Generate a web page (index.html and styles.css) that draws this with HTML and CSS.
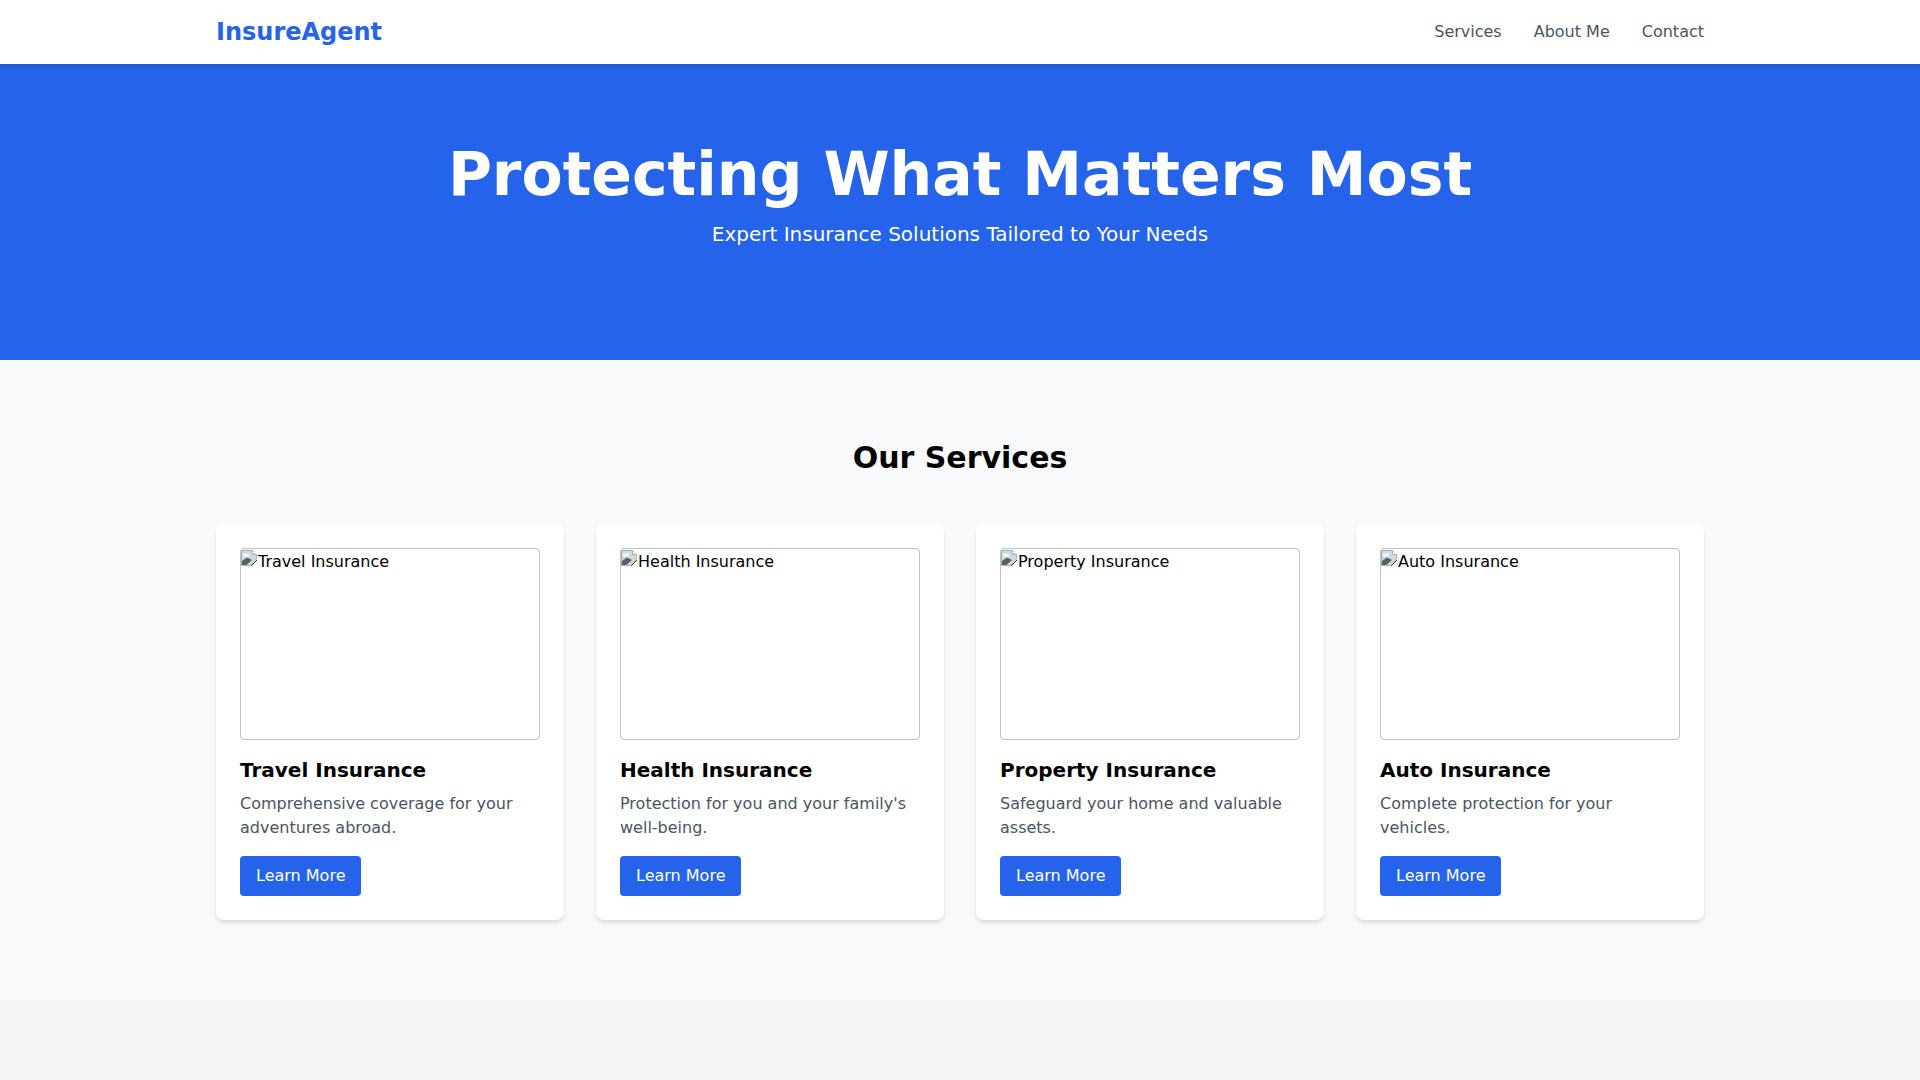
FILE: index.html
```html
<!DOCTYPE html>
<html lang="en">

<head>
    <meta charset="UTF-8">
    <meta name="viewport" content="width=device-width, initial-scale=1.0">
    <title>InsureAgent</title>
    <link rel="stylesheet" href="styles.css">
</head>

<body>
    <header class="header">
        <div class="container header-inner">
            <a class="logo" href="#">InsureAgent</a>
            <nav class="nav">
                <a href="#services">Services</a>
                <a href="#about">About Me</a>
                <a href="#contact">Contact</a>
            </nav>
        </div>
    </header>

    <section class="hero">
        <div class="container">
            <h1 class="hero-title">Protecting What Matters Most</h1>
            <p class="hero-sub">Expert Insurance Solutions Tailored to Your Needs</p>
        </div>
    </section>

    <section class="services" id="services">
        <div class="container">
            <h2 class="section-title">Our Services</h2>
            <div class="cards">
                <div class="card">
                    <div class="card-img">
                        <svg class="broken" width="16" height="16" viewBox="0 0 16 16">
                            <path d="M0.5 0.5h11l4 4V9L9 15.5H0.5z" fill="#cfd9e3" stroke="#a7aeb5" />
                            <path d="M11.5 0.5v4h4" fill="#fff" stroke="#a7aeb5" />
                            <path d="M2 3.5h6v3H2z" fill="#f4f7fa" />
                            <path d="M1 15V11l5-3.5 5 2.5-5.5 5z" fill="#56625d" />
                            <path d="M9.5 16l6.5-6.5V16z" fill="#fff" />
                            <path d="M10 16l6-6" stroke="#333" stroke-width="1" />
                        </svg>Travel Insurance
                    </div>
                    <h3 class="card-title">Travel Insurance</h3>
                    <p class="card-text">Comprehensive coverage for your adventures abroad.</p>
                    <a class="btn" href="#">Learn More</a>
                </div>
                <div class="card">
                    <div class="card-img">
                        <svg class="broken" width="16" height="16" viewBox="0 0 16 16">
                            <path d="M0.5 0.5h11l4 4V9L9 15.5H0.5z" fill="#cfd9e3" stroke="#a7aeb5" />
                            <path d="M11.5 0.5v4h4" fill="#fff" stroke="#a7aeb5" />
                            <path d="M2 3.5h6v3H2z" fill="#f4f7fa" />
                            <path d="M1 15V11l5-3.5 5 2.5-5.5 5z" fill="#56625d" />
                            <path d="M9.5 16l6.5-6.5V16z" fill="#fff" />
                            <path d="M10 16l6-6" stroke="#333" stroke-width="1" />
                        </svg>Health Insurance
                    </div>
                    <h3 class="card-title">Health Insurance</h3>
                    <p class="card-text">Protection for you and your family's well-being.</p>
                    <a class="btn" href="#">Learn More</a>
                </div>
                <div class="card">
                    <div class="card-img">
                        <svg class="broken" width="16" height="16" viewBox="0 0 16 16">
                            <path d="M0.5 0.5h11l4 4V9L9 15.5H0.5z" fill="#cfd9e3" stroke="#a7aeb5" />
                            <path d="M11.5 0.5v4h4" fill="#fff" stroke="#a7aeb5" />
                            <path d="M2 3.5h6v3H2z" fill="#f4f7fa" />
                            <path d="M1 15V11l5-3.5 5 2.5-5.5 5z" fill="#56625d" />
                            <path d="M9.5 16l6.5-6.5V16z" fill="#fff" />
                            <path d="M10 16l6-6" stroke="#333" stroke-width="1" />
                        </svg>Property Insurance
                    </div>
                    <h3 class="card-title">Property Insurance</h3>
                    <p class="card-text">Safeguard your home and valuable assets.</p>
                    <a class="btn" href="#">Learn More</a>
                </div>
                <div class="card">
                    <div class="card-img">
                        <svg class="broken" width="16" height="16" viewBox="0 0 16 16">
                            <path d="M0.5 0.5h11l4 4V9L9 15.5H0.5z" fill="#cfd9e3" stroke="#a7aeb5" />
                            <path d="M11.5 0.5v4h4" fill="#fff" stroke="#a7aeb5" />
                            <path d="M2 3.5h6v3H2z" fill="#f4f7fa" />
                            <path d="M1 15V11l5-3.5 5 2.5-5.5 5z" fill="#56625d" />
                            <path d="M9.5 16l6.5-6.5V16z" fill="#fff" />
                            <path d="M10 16l6-6" stroke="#333" stroke-width="1" />
                        </svg>Auto Insurance
                    </div>
                    <h3 class="card-title">Auto Insurance</h3>
                    <p class="card-text">Complete protection for your vehicles.</p>
                    <a class="btn" href="#">Learn More</a>
                </div>
            </div>
        </div>
    </section>
</body>

</html>
```

FILE: styles.css
```css
body {
    margin: 0;
    font-family: "DejaVu Sans", sans-serif;
    background-color: #f3f4f6; /* gray-100 */
    color: #000;
}

a {
    text-decoration: none;
}

.container {
    max-width: 1536px;
    margin: 0 auto;
    padding: 0 24px;
    box-sizing: border-box;
}

/* header */
.header {
    background-color: #fff;
    box-shadow: 0 4px 6px -1px rgba(0, 0, 0, 0.1);
    position: relative;
    z-index: 1;
}

.header-inner {
    height: 64px;
    display: flex;
    align-items: center;
    justify-content: space-between;
}

.logo {
    font-size: 24px;
    line-height: 32px;
    font-weight: bold;
    color: #2563eb;
}

.nav {
    display: flex;
    gap: 32px;
}

.nav a {
    color: #4b5563;
    font-size: 16px;
    line-height: 24px;
}

/* hero */
.hero {
    background-color: #2563eb;
    color: #fff;
    text-align: center;
    padding: 80px 0 112px;
}

.hero-title {
    margin: 0 0 16px;
    font-size: 60px;
    line-height: 1;
    font-weight: bold;
}

.hero-sub {
    margin: 0;
    font-size: 20px;
    line-height: 28px;
}

/* services */
.services {
    background-color: #f9fafb;
    padding: 80px 0;
}

.section-title {
    margin: 0 0 48px;
    text-align: center;
    font-size: 30px;
    line-height: 36px;
    font-weight: bold;
}

.cards {
    display: grid;
    grid-template-columns: repeat(4, 1fr);
    gap: 32px;
}

.card {
    background-color: #fff;
    border-radius: 8px;
    box-shadow: 0 4px 6px -1px rgba(0, 0, 0, 0.1), 0 2px 4px -2px rgba(0, 0, 0, 0.1);
    padding: 24px;
}

/* stands in for the broken product image */
.card-img {
    height: 192px;
    box-sizing: border-box;
    border: 1px solid #c0c0c0;
    border-radius: 4px;
    margin-bottom: 16px;
    font-size: 16px;
    line-height: 20px;
    color: #000;
    padding: 3px 0 0;
}

.broken {
    vertical-align: top;
    margin: -2px 1px 0 0;
}

.card-title {
    margin: 0 0 8px;
    font-size: 20px;
    line-height: 28px;
    font-weight: bold;
}

.card-text {
    margin: 0 0 16px;
    color: #4b5563;
    font-size: 16px;
    line-height: 24px;
}

.btn {
    display: inline-block;
    background-color: #2563eb;
    color: #fff;
    font-size: 16px;
    line-height: 24px;
    padding: 8px 16px;
    border-radius: 4px;
}

.btn:hover {
    background-color: #1d4ed8;
}
```
